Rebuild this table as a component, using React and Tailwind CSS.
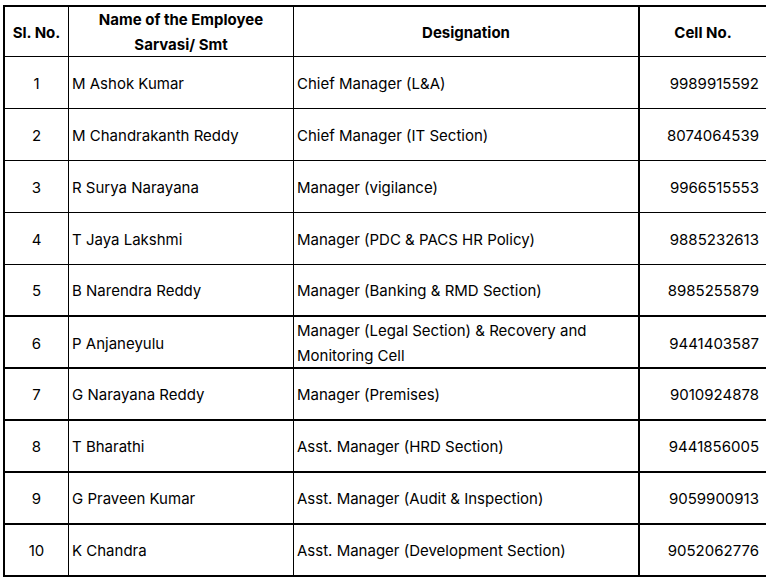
import React from "react";

const rows = [
  ["1", "M Ashok Kumar", "Chief Manager (L&A)", "9989915592", false],
  ["2", "M Chandrakanth Reddy", "Chief Manager (IT Section)", "8074064539", false],
  ["3", "R Surya Narayana", "Manager (vigilance)", "9966515553", false],
  ["4", "T Jaya Lakshmi", "Manager (PDC & PACS HR Policy)", "9885232613", false],
  ["5", "B Narendra Reddy", "Manager (Banking & RMD Section)", "8985255879", true],
  ["6", "P Anjaneyulu", "Manager (Legal Section) & Recovery and Monitoring Cell", "9441403587", true],
  ["7", "G Narayana Reddy", "Manager (Premises)", "9010924878", true],
  ["8", "T Bharathi", "Asst. Manager (HRD Section)", "9441856005", true],
  ["9", "G Praveen Kumar", "Asst. Manager (Audit & Inspection)", "9059900913", true],
  ["10", "K Chandra", "Asst. Manager (Development Section)", "9052062776", true],
];

export default function App() {
  return (
    <div className="w-[766px] h-[578px] overflow-hidden bg-white text-black font-['Inter',sans-serif] text-[15px] leading-[25px]">
      <div className="mt-[5px] ml-[3px] w-[763px] border-l-2 border-t-2 border-black">
        <div className="grid grid-cols-[64px_225px_346px_1fr] h-[50px] border-b border-black font-bold">
          <div className="flex items-center justify-center border-r border-black">Sl. No.</div>
          <div className="flex flex-col items-center justify-center border-r border-black text-center">
            <span>Name of the Employee</span>
            <span>Sarvasi/ Smt</span>
          </div>
          <div className="flex items-center justify-center border-r-2 border-black">Designation</div>
          <div className="flex items-center justify-center">Cell No.</div>
        </div>
        {rows.map(([n, name, des, cell, thick]) => (
          <div
            key={n}
            className={
              thick
                ? "grid grid-cols-[64px_225px_346px_1fr] h-[52px] border-b-2 border-black"
                : "grid grid-cols-[64px_225px_346px_1fr] h-[52px] border-b border-black"
            }
          >
            <div className="flex items-center justify-center pt-[1px] border-r border-black">{n}</div>
            <div className="flex items-center pl-[3px] pt-[1px] border-r border-black">{name}</div>
            <div className="flex items-center pl-[3px] pr-[20px] pt-[1px] border-r-2 border-black">{des}</div>
            <div className="flex items-center justify-end pr-[7px] pt-[1px]">{cell}</div>
          </div>
        ))}
      </div>
    </div>
  );
}
